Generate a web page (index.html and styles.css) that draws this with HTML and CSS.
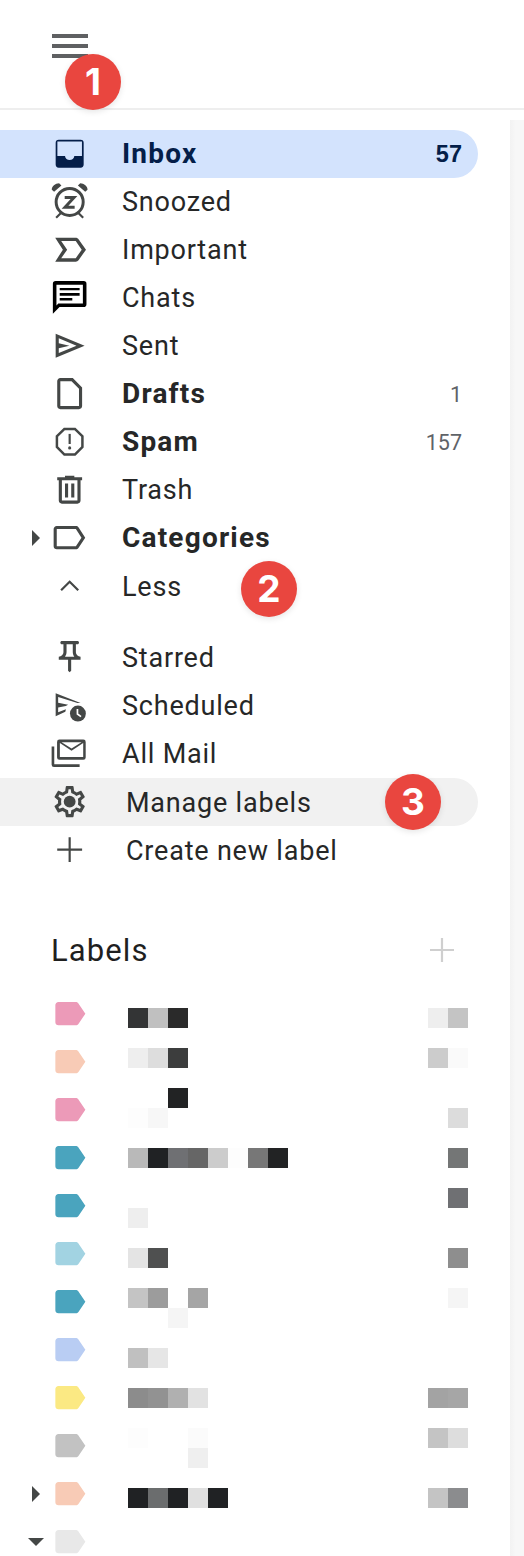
FILE: index.html
```html
<!DOCTYPE html>
<html lang="en">
<head>
<meta charset="utf-8">
<title>Mail navigation</title>
<link rel="stylesheet" href="styles.css">
</head>
<body>
<svg class="defs" aria-hidden="true"><symbol id="tag" viewBox="0 0 24 24"><path d="M17.630 5.400C17.270 4.850 16.670 4.500 16 4.500H4.800C3.700 4.500 2.800 5.400 2.800 6.500v11c0 1.100.9 2 2 2H16c.67 0 1.270-.35 1.630-.9L22.100 12z"/></symbol></svg>
<header class="topbar">
  <svg class="menu" viewBox="0 0 36 24"><rect width="36" height="4"/><rect y="10" width="36" height="4"/><rect y="20" width="36" height="4"/></svg>
  <span class="badge badge-one">1</span>
</header>
<div class="main">
  <nav class="sidebar">
    <ul class="list">
      <li class="row active">
        <svg class="icon icon-active" viewBox="0 0 24 24"><path fill-rule="evenodd" d="M5 3h14a2 2 0 0 1 2 2v14a2 2 0 0 1-2 2H5a2 2 0 0 1-2-2V5a2 2 0 0 1 2-2zM4.100 4.100v9.400H9c.2 1.600 1.400 2.600 3 2.600s2.800-1 3-2.600h4.900V4.100z"/></svg>
        <span class="name strong">Inbox</span><span class="count count-active">57</span>
      </li>
      <li class="row">
        <svg class="icon" viewBox="0 0 24 24"><circle class="line" cx="12" cy="12.200" r="8.700"/><path d="M.5 4.400C.4 2 2.800.1 5.200.1l1.500 1.500-4.700 4zM23.500 4.400C23.600 2 21.200.1 18.800.1l-1.500 1.500 4.700 4z"/><path class="line thin" d="M6.400 19.300 3.300 22.300M17.600 19.300l3.100 3"/><path class="line" d="M8.800 9.300h6L9 15.600h6.200"/></svg>
        <span class="name">Snoozed</span>
      </li>
      <li class="row">
        <svg class="icon" viewBox="0 0 24 24"><path transform="translate(12.600 12) scale(1.100) translate(-12 -12)" d="M15 19H3l4.500-7L3 5h12c.65 0 1.260.31 1.630.84L21 12l-4.370 6.160c-.37.52-.98.84-1.630.84zm-8.500-2H15l3.500-5L15 7H6.500l3.500 5-3.500 5z"/></svg>
        <span class="name">Important</span>
      </li>
      <li class="row">
        <svg class="icon icon-black" viewBox="0 0 24 24"><path fill-rule="evenodd" d="M3 1.300h18a1.800 1.800 0 0 1 1.800 1.800V16.200a1.800 1.800 0 0 1-1.800 1.800H5.500l-4.300 4.300V3.100A1.800 1.800 0 0 1 3 1.300zM3.500 3.700v13.300l1.200-1.300h15.800V3.700z"/><path d="M5.600 5.800h12.800v1.500H5.600zM5.600 9h12.800v1.700H5.600zM5.600 12.200h8.100v1.700H5.600z"/></svg>
        <span class="name">Chats</span>
      </li>
      <li class="row">
        <svg class="icon" viewBox="0 0 24 24"><path fill-rule="evenodd" d="M3 4.300 21.600 12 3 19.700zM5 7.300v3.100l6.800 1.600L5 13.600v3.100L16.400 12z"/></svg>
        <span class="name">Sent</span>
      </li>
      <li class="row">
        <svg class="icon" viewBox="0 0 24 24"><path d="M14 2H6c-1.100 0-2 .9-2 2v16c0 1.100.9 2 2 2h12c1.100 0 2-.9 2-2V8l-6-6zM18 20H6V4h7.200L18 8.800V20z"/></svg>
        <span class="name strong">Drafts</span><span class="count">1</span>
      </li>
      <li class="row">
        <svg class="icon" viewBox="0 0 24 24"><path d="M15.730 3H8.270L3 8.270v7.460L8.270 21h7.460L21 15.730V8.270L15.730 3zM19.400 15.100 15.100 19.400H8.900L4.600 15.100V8.900L8.900 4.600h6.200L19.400 8.900z"/><path d="M11.300 7h1.400v6.500h-1.400z"/><circle cx="12" cy="16" r="1"/></svg>
        <span class="name strong">Spam</span><span class="count">157</span>
      </li>
      <li class="row">
        <svg class="icon" viewBox="0 0 24 24"><path d="M15 4V3H9v1H4v2h1v13c0 1.100.9 2 2 2h10c1.100 0 2-.9 2-2V6h1V4h-5zm2 15H7V6h10v13zM9 8h2v9H9zm4 0h2v9h-2z"/></svg>
        <span class="name">Trash</span>
      </li>
      <li class="row">
        <span class="caret"></span>
        <svg class="icon" viewBox="0 0 24 24"><path fill-rule="evenodd" d="M16 4.500c.8 0 1.300.35 1.650.85L22 12l-4.350 6.650c-.35.5-.85.85-1.650.85H3.700c-1.100 0-2-.9-2-2v-11c0-1.100.9-2 2-2zM3.700 6.500v11H16l3.600-5.500L16 6.500z"/></svg>
        <span class="name strong">Categories</span>
      </li>
      <li class="row row-low">
        <svg class="icon" viewBox="0 0 24 24"><path d="M12 8.500l-6 6 1 1 5-5 5 5 1-1z"/></svg>
        <span class="name">Less</span>
        <span class="badge badge-two">2</span>
      </li>
    </ul>
    <ul class="list list-more">
      <li class="row">
        <svg class="icon" viewBox="0 0 24 24"><path d="M14 4v5c0 1.120.37 2.160 1 3H9c.65-.86 1-1.900 1-3V4h4m3-2H7c-.55 0-1 .45-1 1s.45 1 1 1h1v5c0 1.660-1.340 3-3 3v2h5.970v7l1 1 1-1v-7H19v-2c-1.660 0-3-1.340-3-3V4h1c.55 0 1-.45 1-1s-.45-1-1-1z"/></svg>
        <span class="name">Starred</span>
      </li>
      <li class="row">
        <svg class="icon" viewBox="0 0 24 24"><path fill-rule="evenodd" d="M3 4.600 19 11a6 6 0 0 0-2-.1L4.600 7v3.700L11 12l-1.500.8-4.900 1v3l5-1.900-.4 1.700L3 19.500z"/><circle cx="17.300" cy="17.700" r="5.100"/><path class="clock" d="M17 14.800v3.200l2.300 1.700"/></svg>
        <span class="name">Scheduled</span>
      </li>
      <li class="row">
        <svg class="icon" viewBox="0 0 24 24"><path fill-rule="evenodd" d="M5.400 3.600h15.400a1.500 1.500 0 0 1 1.500 1.500v10a1.500 1.500 0 0 1-1.500 1.500H5.400a1.500 1.500 0 0 1-1.500-1.500v-10a1.500 1.500 0 0 1 1.500-1.500zM5.700 5.800v9h15v-9l-7.500 5zM6.800 5.300l6.400 4 6.400-4z"/><path d="M.4 8H2.100v11.400h16.300v1.800H1.900A1.500 1.500 0 0 1 .4 19.700z"/></svg>
        <span class="name">All Mail</span>
      </li>
      <li class="row hovered">
        <svg class="icon" viewBox="0 0 24 24"><path d="M19.430 12.980c.04-.32.07-.64.07-.98s-.03-.66-.07-.98l2.110-1.650c.19-.15.24-.42.12-.64l-2-3.460c-.12-.22-.39-.3-.61-.22l-2.490 1c-.52-.4-1.080-.73-1.690-.98l-.38-2.650C14.460 2.180 14.250 2 14 2h-4c-.25 0-.46.18-.49.42l-.38 2.650c-.61.25-1.170.59-1.690.98l-2.490-1c-.23-.09-.49 0-.61.22l-2 3.460c-.13.22-.07.49.12.64l2.110 1.650c-.04.32-.07.65-.07.98s.03.66.07.98l-2.110 1.650c-.19.15-.24.42-.12.64l2 3.460c.12.22.39.3.61.22l2.490-1c.52.4 1.080.73 1.690.98l.38 2.650c.03.24.24.42.49.42h4c.25 0 .46-.18.49-.42l.38-2.650c.61-.25 1.170-.59 1.690-.98l2.490 1c.23.09.49 0 .61-.22l2-3.460c.12-.22.07-.49-.12-.64l-2.110-1.650zM17.450 11.270c.04.31.05.52.05.73 0 .21-.02.43-.05.73l-.14 1.130.89.7 1.080.84-.7 1.210-1.270-.51-1.040-.42-.9.68c-.43.32-.84.56-1.250.73l-1.060.43-.16 1.130-.2 1.350h-1.400l-.19-1.350-.16-1.130-1.060-.43c-.43-.18-.83-.41-1.230-.71l-.91-.7-1.060.43-1.270.51-.7-1.210 1.080-.84.89-.7-.14-1.130c-.03-.31-.05-.54-.05-.74s.02-.43.05-.73l.14-1.130-.89-.7-1.080-.84.7-1.210 1.270.51 1.040.42.9-.68c.43-.32.84-.56 1.250-.73l1.060-.43.16-1.130.2-1.350h1.390l.19 1.350.16 1.130 1.060.43c.43.18.83.41 1.230.71l.91.7 1.060-.43 1.270-.51.7 1.210-1.070.85-.89.7.14 1.130z"/><circle cx="12" cy="12" r="3.800"/></svg>
        <span class="name name-shift">Manage labels</span>
        <span class="badge badge-three">3</span>
      </li>
      <li class="row">
        <svg class="icon" viewBox="0 0 24 24"><path d="M4 11.300h7.300V4h1.400v7.300H20v1.400h-7.300V20h-1.400v-7.300H4z"/></svg>
        <span class="name name-shift">Create new label</span>
      </li>
    </ul>
    <div class="labels-head">
      <h2 class="labels-title">Labels</h2>
      <svg class="labels-add" viewBox="0 0 24 24"><path d="M0 10.900h10.900V0h2.200v10.900H24v2.200H13.100V24h-2.200V13.100H0z"/></svg>
    </div>
    <div class="labels">
      <ul class="tags">
        <li class="tag"><svg class="tag-icon t-pink"><use href="#tag"/></svg></li>
        <li class="tag"><svg class="tag-icon t-peach"><use href="#tag"/></svg></li>
        <li class="tag"><svg class="tag-icon t-pink"><use href="#tag"/></svg></li>
        <li class="tag"><svg class="tag-icon t-teal"><use href="#tag"/></svg></li>
        <li class="tag"><svg class="tag-icon t-teal"><use href="#tag"/></svg></li>
        <li class="tag"><svg class="tag-icon t-sky"><use href="#tag"/></svg></li>
        <li class="tag"><svg class="tag-icon t-teal"><use href="#tag"/></svg></li>
        <li class="tag"><svg class="tag-icon t-peri"><use href="#tag"/></svg></li>
        <li class="tag"><svg class="tag-icon t-yellow"><use href="#tag"/></svg></li>
        <li class="tag"><svg class="tag-icon t-grey"><use href="#tag"/></svg></li>
        <li class="tag"><span class="caret"></span><svg class="tag-icon t-peach"><use href="#tag"/></svg></li>
        <li class="tag"><span class="caret-down"></span><svg class="tag-icon t-pale"><use href="#tag"/></svg></li>
      </ul>
      <div class="mosaic">
        <div class="mrow"><i class="c0 k33"></i><i class="c1 kc0"></i><i class="c2 k2a"></i><i class="c15 kee"></i><i class="c16 kc4"></i></div>
        <div class="mrow"></div>
        <div class="mrow"><i class="c0 kee"></i><i class="c1 kdd"></i><i class="c2 k3c"></i><i class="c15 kcc"></i><i class="c16 kfa"></i></div>
        <div class="mrow"></div>
        <div class="mrow"><i class="c2 k22"></i></div>
        <div class="mrow"><i class="c0 kfd"></i><i class="c1 kf7"></i><i class="c16 kdc"></i></div>
        <div class="mrow"></div>
        <div class="mrow"><i class="c0 kb9"></i><i class="c1 k20"></i><i class="c2 k70"></i><i class="c3 k66"></i><i class="c4 kcc"></i><i class="c5 kfd"></i><i class="c6 k77"></i><i class="c7 k22"></i><i class="c16 k75"></i></div>
        <div class="mrow"></div>
        <div class="mrow"><i class="c16 k70"></i></div>
        <div class="mrow"><i class="c0 kee"></i></div>
        <div class="mrow"></div>
        <div class="mrow"><i class="c0 ke4"></i><i class="c1 k4f"></i><i class="c16 k8e"></i></div>
        <div class="mrow"></div>
        <div class="mrow"><i class="c0 kc4"></i><i class="c1 k9c"></i><i class="c3 ka5"></i><i class="c16 kf5"></i></div>
        <div class="mrow"><i class="c2 kf5"></i></div>
        <div class="mrow"></div>
        <div class="mrow"><i class="c0 kc0"></i><i class="c1 ke6"></i></div>
        <div class="mrow"></div>
        <div class="mrow"><i class="c0 k8c"></i><i class="c1 k92"></i><i class="c2 kb0"></i><i class="c3 ke2"></i><i class="c15 ka3"></i><i class="c16 ka6"></i></div>
        <div class="mrow"></div>
        <div class="mrow"><i class="c0 kfd"></i><i class="c3 kfb"></i><i class="c15 kc4"></i><i class="c16 kdd"></i></div>
        <div class="mrow"><i class="c3 kef"></i></div>
        <div class="mrow"></div>
        <div class="mrow"><i class="c0 k20"></i><i class="c1 k6c"></i><i class="c2 k20"></i><i class="c3 ke0"></i><i class="c4 k20"></i><i class="c15 kc4"></i><i class="c16 k8b"></i></div>
      </div>
    </div>
  </nav>
  <aside class="panel"></aside>
</div>
</body>
</html>
```
FILE: styles.css
```css
* { box-sizing: border-box; }
html, body { margin: 0; padding: 0; height: 1556px; overflow: hidden; background: #fff; }
body { font-family: Roboto, "Liberation Sans", sans-serif; color: #1f1f1f; }
ul { list-style: none; margin: 0; padding: 0; }
.defs { display: none; }

.topbar { position: relative; height: 110px; border-bottom: 2px solid #eeeeee; padding: 34px 0 0 52px; }
.menu { display: block; width: 36px; height: 24px; fill: #5f6062; }

.badge {
  position: absolute; width: 56px; height: 56px; border-radius: 50%;
  background: #e9463f; color: #fff; font: 700 37px/56px Inter, Roboto, sans-serif;
  text-align: center; box-shadow: 0 2px 6px rgba(0,0,0,.1); z-index: 2;
}
.badge-one { left: 65px; top: 54px; }
.badge-two { left: 241px; top: -1px; }
.badge-three { left: 385px; top: -4px; }

.main { display: flex; height: 1446px; }
.sidebar { width: 510px; flex: none; padding-top: 20px; }
.panel { flex: 1; margin-top: 10px; background: linear-gradient(90deg, #f2f2f2, #f7f7f7 40%); }

.row { position: relative; display: flex; align-items: center; height: 48px; width: 478px; padding: 0 16px 0 51.33px; border-radius: 0 24px 24px 0; }
.row .caret { position: absolute; left: 32px; top: 16px; }
.active { background: #d3e3fd; color: #041e49; }
.hovered { background: #f1f1f1; }
.icon { width: 37.33px; height: 37.33px; flex: none; fill: #444746; overflow: visible; }
.icon-active { fill: #041e49; }
.icon-black { fill: #000; }
.line { fill: none; stroke: #444746; stroke-width: 1.9; }
.thin { stroke-width: 1.4; }
.clock { fill: none; stroke: #fff; stroke-width: 1.1; }
.name { margin-left: 33.33px; font-size: 27px; line-height: 48px; letter-spacing: .8px; flex: 1; color: #262727; }
.name-shift { margin-left: 37.33px; }
.row-low .name, .list-more .name { padding-top: 1px; }
.strong { font-weight: 700; font-size: 28px; letter-spacing: 1.2px; }
.active .name { color: #041e49; }
.count { font-size: 21.500px; letter-spacing: 0; color: #5f6368; }
.count-active { font: 700 23.500px "Liberation Sans", sans-serif; color: #041e49; }

.list-more { margin-top: 23px; }
.list-more .row:nth-child(4) { margin-top: 1px; }

.labels-head { display: flex; align-items: center; justify-content: space-between; height: 48px; margin-top: 52px; padding: 0 56px 0 51px; }
.labels-title { margin: 0; font-size: 31px; font-weight: 400; letter-spacing: 1.1px; }
.labels-add { width: 24px; height: 24px; fill: #cfcfcf; }

.labels { display: flex; margin-top: 16px; }
.tags { width: 128px; flex: none; }
.tag { position: relative; height: 48px; padding-left: 51.33px; display: flex; align-items: center; }
.tag-icon { width: 37.33px; height: 37.33px; flex: none; }
.t-pink { fill: #ec9ab8; }
.t-peach { fill: #f8cbb6; }
.t-teal { fill: #4aa4be; }
.t-sky { fill: #a2d3e2; }
.t-peri { fill: #b9cdf3; }
.t-yellow { fill: #fbe983; }
.t-grey { fill: #c2c2c2; }
.t-pale { fill: #e8e8e8; }
.caret { position: absolute; left: 32px; top: 16px; width: 0; height: 0; border-left: 8px solid #444746; border-top: 8px solid transparent; border-bottom: 8px solid transparent; }
.caret-down { position: absolute; left: 28px; top: 19.500px; width: 0; height: 0; border-top: 8px solid #444746; border-left: 8px solid transparent; border-right: 8px solid transparent; }

.mosaic { padding-top: 18px; }
.mrow { display: grid; grid-template-columns: repeat(17, 20px); grid-template-rows: 20px; height: 20px; }
.mrow i { display: block; grid-row: 1; }
.c0 { grid-column: 1; } .c1 { grid-column: 2; } .c2 { grid-column: 3; } .c3 { grid-column: 4; }
.c4 { grid-column: 5; } .c5 { grid-column: 6; } .c6 { grid-column: 7; } .c7 { grid-column: 8; }
.c15 { grid-column: 16; } .c16 { grid-column: 17; }
.k20 { background: #202224; } .k22 { background: #222324; } .k2a { background: #2a2a2a; } .k33 { background: #333435; }
.k3c { background: #3c3d3d; } .k4f { background: #4f5050; } .k66 { background: #666666; } .k6c { background: #6b6d6e; }
.k70 { background: #6f7073; } .k75 { background: #747676; } .k77 { background: #777777; } .k8b { background: #8b8c8e; }
.k8c { background: #8c8c8c; } .k8e { background: #8e8e8e; } .k92 { background: #929292; } .k9c { background: #9c9c9c; }
.ka3 { background: #a3a3a3; } .ka5 { background: #a5a5a5; } .ka6 { background: #a6a6a6; } .kb0 { background: #b0b0b0; }
.kb9 { background: #b9b9b9; } .kc0 { background: #c0c0c0; } .kc4 { background: #c4c4c4; } .kcc { background: #cccccc; }
.kdc { background: #dcdcdc; } .kdd { background: #dddddd; } .ke0 { background: #e0e0e0; } .ke2 { background: #e2e2e2; }
.ke4 { background: #e4e4e4; } .ke6 { background: #e6e6e6; } .kee { background: #eeeeee; } .kef { background: #efefef; }
.kf5 { background: #f5f5f5; } .kf7 { background: #f7f7f7; } .kfa { background: #fafafa; } .kfb { background: #fbfbfb; }
.kfd { background: #fdfdfd; }
```
